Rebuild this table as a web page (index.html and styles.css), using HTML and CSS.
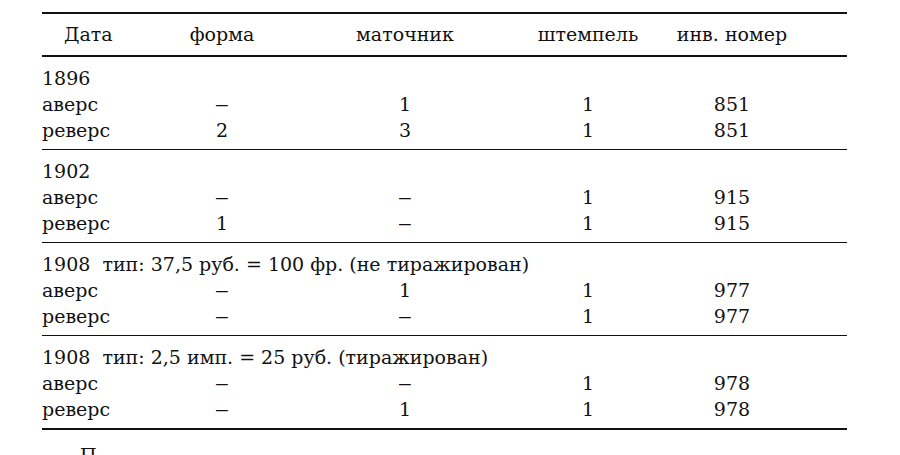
FILE: index.html
```html
<!DOCTYPE html>
<html lang="ru">
<head>
<meta charset="utf-8">
<title>Таблица</title>
<link rel="stylesheet" href="styles.css">
</head>
<body>
<div class="page">
  <div class="tbl">
    <div class="row head">
      <div class="c c1 h1">Дата</div>
      <div class="c c2">форма</div>
      <div class="c c3">маточник</div>
      <div class="c c4">штемпель</div>
      <div class="c c5">инв. номер</div>
    </div>
    <div class="group">
      <div class="title">1896</div>
      <div class="row"><div class="c c1">аверс</div><div class="c c2"><span class="dash">–</span></div><div class="c c3">1</div><div class="c c4">1</div><div class="c c5">851</div></div>
      <div class="row"><div class="c c1">реверс</div><div class="c c2">2</div><div class="c c3">3</div><div class="c c4">1</div><div class="c c5">851</div></div>
    </div>
    <div class="group">
      <div class="title">1902</div>
      <div class="row"><div class="c c1">аверс</div><div class="c c2"><span class="dash">–</span></div><div class="c c3"><span class="dash">–</span></div><div class="c c4">1</div><div class="c c5">915</div></div>
      <div class="row"><div class="c c1">реверс</div><div class="c c2">1</div><div class="c c3"><span class="dash">–</span></div><div class="c c4">1</div><div class="c c5">915</div></div>
    </div>
    <div class="group">
      <div class="title">1908&nbsp; тип: 37,5 руб. = 100 фр. (не тиражирован)</div>
      <div class="row"><div class="c c1">аверс</div><div class="c c2"><span class="dash">–</span></div><div class="c c3">1</div><div class="c c4">1</div><div class="c c5">977</div></div>
      <div class="row"><div class="c c1">реверс</div><div class="c c2"><span class="dash">–</span></div><div class="c c3"><span class="dash">–</span></div><div class="c c4">1</div><div class="c c5">977</div></div>
    </div>
    <div class="group">
      <div class="title">1908&nbsp; тип: 2,5 имп. = 25 руб. (тиражирован)</div>
      <div class="row"><div class="c c1">аверс</div><div class="c c2"><span class="dash">–</span></div><div class="c c3"><span class="dash">–</span></div><div class="c c4">1</div><div class="c c5">978</div></div>
      <div class="row"><div class="c c1">реверс</div><div class="c c2"><span class="dash">–</span></div><div class="c c3">1</div><div class="c c4">1</div><div class="c c5">978</div></div>
    </div>
  </div>
  <p class="next">П</p>
</div>
</body>
</html>
```
FILE: styles.css
```css
html, body {
  margin: 0;
  padding: 0;
  background: #ffffff;
  height: 455px;
  overflow: hidden;
}
body {
  font-family: "DejaVu Serif", "Liberation Serif", serif;
  font-size: 19px;
  color: #111111;
}
.page {
  padding: 12px 0 0 42px;
}
.tbl {
  width: 805px;
  border-top: 2px solid #111;
  border-bottom: 2px solid #111;
}
.row {
  display: grid;
  grid-template-columns: 110px 140px 226px 140px 148px;
  height: 26px;
  line-height: 26px;
}
.row.head {
  height: 41px;
  line-height: 41px;
  border-bottom: 2px solid #111;
}
.c {
  text-align: center;
  white-space: nowrap;
}
.c1 {
  text-align: left;
}
.h1 {
  padding-left: 22px;
}
.dash {
  display: inline-block;
  transform: scaleX(1.5);
}
.group {
  padding: 8px 0 6px;
}
.group + .group {
  border-top: 1.5px solid #111;
}
.title {
  height: 26px;
  line-height: 26px;
  white-space: nowrap;
}
.next {
  margin: 12px 0 0 38px;
  line-height: 26px;
}
```
